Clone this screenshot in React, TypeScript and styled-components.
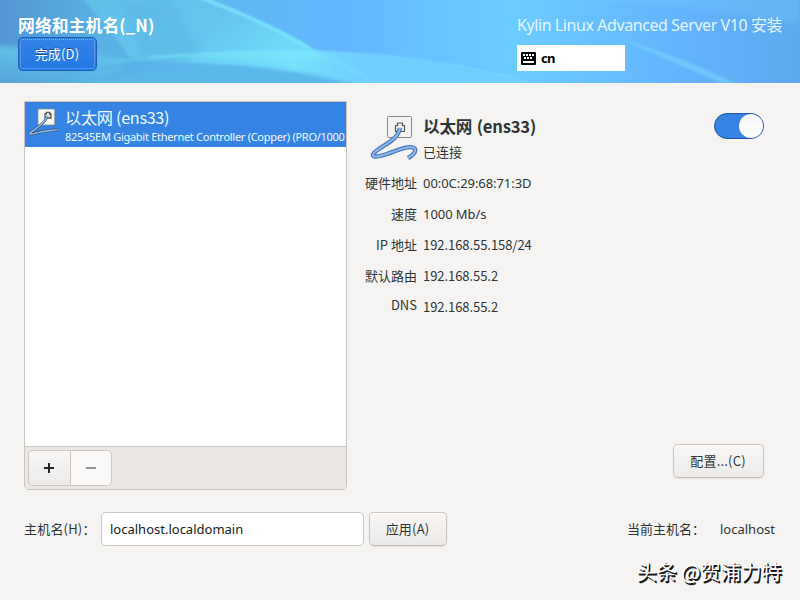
import React from "react";
import styled, { createGlobalStyle, css } from "styled-components";

const GlobalStyle = createGlobalStyle`
  * { box-sizing: border-box; }
  body {
    margin: 0;
    background: #f5f4f2;
    color: #2e3436;
    font: 13px/20px "Noto Sans", "Noto Sans CJK SC", sans-serif;
  }
`;

const Window = styled.div`
  width: 800px;
  height: 600px;
  overflow: hidden;
  display: flex;
  flex-direction: column;
  background: #f5f4f2;
`;

const Header = styled.header`
  position: relative;
  flex: none;
  height: 83px;
  padding: 0 18px;
  display: flex;
  justify-content: space-between;
  overflow: hidden;
  color: #fff;
`;

const Backdrop = styled.svg`
  position: absolute;
  inset: 0;
`;

const HeaderStart = styled.div`
  position: relative;
  padding-top: 13px;
`;

const HeaderEnd = styled.div`
  position: relative;
  width: 265px;
  padding-top: 13px;
`;

const PageTitle = styled.h1`
  margin: 0;
  font: bold 16.8px/24px "Noto Sans CJK SC", sans-serif;
  letter-spacing: 0.1px;
  white-space: nowrap;
`;

const Product = styled.div`
  font: 16px/24px "Noto Sans", "Noto Sans CJK SC", sans-serif;
  letter-spacing: -0.42px;
  color: #e3f5ff;
  white-space: nowrap;
`;

const Keyboard = styled.div`
  margin-top: 8px;
  width: 108px;
  height: 26px;
  display: flex;
  align-items: center;
  gap: 5px;
  padding: 0 4px;
  background: #fff;
  color: #000;
  font-weight: bold;
  letter-spacing: -0.6px;
`;

const Button = styled.button<{ $w: number; $primary?: boolean }>`
  width: ${(p) => p.$w}px;
  height: 34px;
  padding: 0 1px 0 0;
  border: 1px solid #cdc7c2;
  border-bottom-color: #bfb8b1;
  border-radius: 5px;
  background: linear-gradient(#f8f7f6, #edebe9);
  box-shadow: 0 1px 2px rgba(0, 0, 0, 0.07), inset 0 1px #fff;
  color: #2e3436;
  font: 13px/20px "Noto Sans CJK SC", sans-serif;
  letter-spacing: 0.2px;
  white-space: nowrap;
  ${(p) =>
    p.$primary &&
    css`
      display: block;
      border-color: #1b5fb5;
      background: linear-gradient(#3282e6, #2379e2);
      box-shadow: none;
      color: #fff;
      text-shadow: 0 -1px rgba(0, 0, 0, 0.35);
      outline: 1px dotted rgba(255, 255, 255, 0.4);
      outline-offset: -3px;
    `}
`;

const Body = styled.main`
  flex: 1;
  padding: 18px 24px 0;
`;

const Columns = styled.div`
  height: 389px;
  display: flex;
`;

const DevicePanel = styled.section`
  flex: none;
  width: 323px;
  display: flex;
  flex-direction: column;
  border: 1px solid #cac5c0;
  border-radius: 0 0 5px 5px;
  overflow: hidden;
`;

const DeviceList = styled.div`
  flex: 1;
  background: #fff;
`;

const DeviceRow = styled.div`
  height: 45px;
  padding: 4px 0 0 3px;
  display: flex;
  gap: 5px;
  background: #3584e4;
  color: #eff9ff;
  overflow: hidden;
  white-space: nowrap;
  svg { flex: none; margin-top: 1px; }
`;

const DeviceName = styled.div`
  font: 16.2px/22px "Noto Sans CJK SC", sans-serif;
  letter-spacing: -0.3px;
`;

const DeviceModel = styled.div`
  font-size: 11px;
  line-height: 18px;
  letter-spacing: -0.28px;
`;

const ListToolbar = styled.div`
  height: 43px;
  padding: 3px;
  display: flex;
  border-top: 1px solid #cdc7c2;
  background: #eae7e5;
`;

const ToolButton = styled.button<{ $off?: boolean }>`
  width: ${(p) => (p.$off ? 41 : 43)}px;
  height: 36px;
  padding: ${(p) => (p.$off ? "0" : "0 2px 0 0")};
  display: grid;
  place-items: center;
  border: 1px solid #cdc7c2;
  border-left-width: ${(p) => (p.$off ? 0 : 1)}px;
  border-radius: ${(p) => (p.$off ? "0 5px 5px 0" : "5px 0 0 5px")};
  background: ${(p) => (p.$off ? "#faf9f8" : "linear-gradient(#f8f7f6, #edebe9)")};
  color: ${(p) => (p.$off ? "#929595" : "#20272a")};
`;

const Details = styled.section`
  flex: 1;
  display: flex;
  flex-direction: column;
  padding: 11px 12px 12px 18px;
`;

const DetailsHead = styled.div`
  height: 56px;
  display: flex;
  align-items: flex-start;
`;

const LargeIcon = styled.div`
  width: 58px;
  padding: 3px 0 0 5px;
`;

const HeadText = styled.div`
  flex: 1;
  padding-top: 2px;
`;

const DetailsTitle = styled.h2`
  margin: 0;
  font: bold 16.6px/24px "Noto Sans CJK SC", sans-serif;
  letter-spacing: -0.2px;
  word-spacing: 1px;
`;

const Status = styled.div`
  margin-top: 4px;
  font-family: "Noto Sans CJK SC", sans-serif;
`;

const Switch = styled.div`
  width: 50px;
  height: 26px;
  margin-top: 1px;
  display: flex;
  justify-content: flex-end;
  border: 1px solid #23579b;
  border-radius: 13px;
  background: #3584e4;
`;

const Knob = styled.div`
  width: 24px;
  height: 24px;
  border-radius: 50%;
  background: linear-gradient(#f6f5f4, #fff);
`;

const Facts = styled.dl`
  margin: 0;
  padding-top: 5px;
  display: grid;
  grid-template-columns: 52px 1fr;
  grid-auto-rows: 31px;
  column-gap: 6px;
  font-family: "Noto Sans CJK SC", sans-serif;
  white-space: nowrap;
`;

const Term = styled.dt<{ $lift?: boolean }>`
  text-align: right;
  margin-top: ${(p) => (p.$lift ? -2 : 0)}px;
`;

const Value = styled.dd<{ $humanist?: boolean }>`
  margin: 0;
  font-family: ${(p) => (p.$humanist ? '"Noto Sans"' : '"Noto Sans CJK SC"')}, sans-serif;
  letter-spacing: -0.06px;
`;

const ConfigureRow = styled.div`
  margin-top: auto;
  display: flex;
  justify-content: flex-end;
`;

const HostRow = styled.div`
  margin-top: 22px;
  height: 34px;
  display: flex;
  align-items: center;
`;

const HostLabel = styled.label<{ $w: number }>`
  width: ${(p) => p.$w}px;
  font-family: "Noto Sans CJK SC", sans-serif;
  letter-spacing: ${(p) => (p.$w < 80 ? 0.2 : 0)}px;
  white-space: nowrap;
`;

const HostInput = styled.input`
  width: 263px;
  height: 34px;
  margin-right: 5px;
  padding: 0 8px;
  border: 1px solid #cdc7c2;
  border-radius: 5px;
  background: #fff;
  color: #171b1c;
  font: 13px/20px "Noto Sans", sans-serif;
`;

const CurrentHost = styled.div`
  margin-left: auto;
  width: 149px;
  display: flex;
`;

const Credit = styled.div`
  margin: 13px -6px 0 0;
  display: flex;
  justify-content: flex-end;
  gap: 4px;
  color: #fff;
  font: 20.3px/24px "Noto Sans CJK SC", sans-serif;
  letter-spacing: 0.1px;
  text-shadow: 1px 1px #111, 1.5px 1.5px #222;
  white-space: nowrap;
`;

function Waves() {
  return (
    <Backdrop width="800" height="83" viewBox="0 0 800 83" aria-hidden="true">
      <defs>
        <linearGradient id="sky">
          <stop offset="0" stopColor="#5295d2" />
          <stop offset=".12" stopColor="#58b0e4" />
          <stop offset=".29" stopColor="#5fb9f3" />
          <stop offset=".42" stopColor="#62b7ff" />
          <stop offset=".64" stopColor="#6bccff" />
          <stop offset=".86" stopColor="#63b3fd" />
          <stop offset="1" stopColor="#5ca9ee" />
        </linearGradient>
        <linearGradient id="teal" x2="1" y2="0.3">
          <stop offset="0" stopColor="#63c2ea" stopOpacity=".85" />
          <stop offset=".6" stopColor="#64c6ee" stopOpacity=".9" />
          <stop offset="1" stopColor="#6ee0f8" stopOpacity=".9" />
        </linearGradient>
        <linearGradient id="ribbon">
          <stop offset="0" stopColor="#68dbf0" stopOpacity=".2" />
          <stop offset=".45" stopColor="#78e7fb" stopOpacity=".9" />
          <stop offset=".6" stopColor="#76defe" stopOpacity=".6" />
          <stop offset="1" stopColor="#78d9ff" stopOpacity=".25" />
        </linearGradient>
        <linearGradient id="depth" x2="0" y2="1">
          <stop offset="0" stopColor="#69d3f0" stopOpacity=".75" />
          <stop offset="1" stopColor="#58b8e6" stopOpacity=".3" />
        </linearGradient>
        <filter id="soft" filterUnits="userSpaceOnUse" x="-20" y="-20" width="840" height="130"><feGaussianBlur stdDeviation="1" /></filter>
        <filter id="haze" filterUnits="userSpaceOnUse" x="-20" y="-20" width="840" height="130"><feGaussianBlur stdDeviation="2.5" /></filter>
      </defs>
      <rect width="800" height="83" fill="url(#sky)" />
      <path d="M78-5H198Q260 19 310 48L330 60L130 58Q108 25 78-5Z" fill="url(#teal)" filter="url(#soft)" />
      <path d="M-5 46Q60 48 130 60L95 90H-5Z" fill="url(#depth)" filter="url(#haze)" />
      <path d="M120 0L142 58H205L170 0Z" fill="#56addf" opacity=".25" filter="url(#haze)" />
      <path d="M90 62Q240 48 330 52Q440 57 540 90H365Q270 58 90 62Z" fill="url(#ribbon)" filter="url(#soft)" />
      <path d="M196-4Q260 19 310 48" fill="none" stroke="#80eafd" strokeWidth="3" opacity=".85" filter="url(#soft)" />
      <path d="M310 48Q345 64 375 83" fill="none" stroke="#7ee4ff" strokeWidth="2" opacity=".4" filter="url(#soft)" />
      <path d="M150 57Q260 49 330 52Q440 57 530 83" fill="none" stroke="#86eaff" strokeWidth="1.5" opacity=".55" filter="url(#soft)" />
      <path d="M75 90Q150 65 230 66Q310 69 370 90Z" fill="#5ab9e9" opacity=".85" filter="url(#haze)" />
      <path d="M60 76Q130 61 190 59" fill="none" stroke="#4ca7da" strokeWidth="2" opacity=".35" filter="url(#soft)" />
      <path d="M620 39Q680 56 735 83H720Q670 60 620 39Z" fill="#77d8ff" opacity=".6" filter="url(#soft)" />
      <path d="M530-5Q690 4 800 24V-5Z" fill="#7bd4ff" opacity=".25" filter="url(#haze)" />
    </Backdrop>
  );
}

function WiredIcon({ size }: { size: number }) {
  const large = size > 40;
  const cable = large
    ? "M30 13C28 26 10 31 4 38C0 43 8 42 17 39C28 35 42 29 45 34C46 37 43 40 38 43"
    : "M29 14C25 26 10 33 3 39C1 42 9 40 17 38C27 35 38 35 44 34";
  return (
    <svg width={size} height={size} viewBox="0 0 48 48" aria-hidden="true">
      <rect x={large ? 17.5 : 15} y={large ? 1.5 : 3} width={large ? 24 : 25} height={large ? 21 : 24} rx="1" fill={large ? "#f3f3f1" : "#f7f7f5"} stroke="#858783" />
      <path d="M25.5 16.5V10.5H27.5V8H32.5V10.5H34.5V16.5Z" fill="#eee" stroke="#555753" strokeWidth={large ? 1.2 : 2} />
      <path d={cable} fill="none" stroke={large ? "#4575b9" : "#35517b"} strokeWidth={large ? 4.4 : 4} />
      <path d={cable} fill="none" stroke={large ? "#8bb6e8" : "#9bbbe3"} strokeWidth="2.1" />
    </svg>
  );
}

function KeyboardIcon() {
  return (
    <svg width="15" height="13" viewBox="0 0 15 13" aria-hidden="true">
      <rect width="15" height="13" rx="1" fill="#000" />
      <path d="M2 2h2v2H2zM5 2h2v2H5zM8 2h2v2H8zM11 2h2v2h-2zM3 5h2v2H3zM6 5h2v2H6zM9 5h2v2H9zM2 9h11v2H2z" fill="#fff" />
    </svg>
  );
}

export default function App() {
  return (
    <>
      <GlobalStyle />
      <Window>
        <Header>
          <Waves />
          <HeaderStart>
            <PageTitle>网络和主机名(_N)</PageTitle>
            <Button $w={79} $primary>完成(D)</Button>
          </HeaderStart>
          <HeaderEnd>
            <Product>Kylin Linux Advanced Server V10 安装</Product>
            <Keyboard><KeyboardIcon />cn</Keyboard>
          </HeaderEnd>
        </Header>
        <Body>
          <Columns>
            <DevicePanel>
              <DeviceList>
                <DeviceRow>
                  <WiredIcon size={32} />
                  <div>
                    <DeviceName>以太网 (ens33)</DeviceName>
                    <DeviceModel>82545EM Gigabit Ethernet Controller (Copper) (PRO/1000</DeviceModel>
                  </div>
                </DeviceRow>
              </DeviceList>
              <ListToolbar>
                <ToolButton>
                  <svg width="10" height="10"><path d="M0 5H10M5 0V10" stroke="currentColor" strokeWidth="2" /></svg>
                </ToolButton>
                <ToolButton $off disabled>
                  <svg width="10" height="10"><path d="M0 5H10" stroke="currentColor" strokeWidth="2" /></svg>
                </ToolButton>
              </ListToolbar>
            </DevicePanel>
            <Details>
              <DetailsHead>
                <LargeIcon><WiredIcon size={48} /></LargeIcon>
                <HeadText>
                  <DetailsTitle>以太网 (ens33)</DetailsTitle>
                  <Status>已连接</Status>
                </HeadText>
                <Switch><Knob /></Switch>
              </DetailsHead>
              <Facts>
                <Term>硬件地址</Term>
                <Value $humanist>00:0C:29:68:71:3D</Value>
                <Term>速度</Term>
                <Value $humanist>1000 Mb/s</Value>
                <Term>IP 地址</Term>
                <Value>192.168.55.158/24</Value>
                <Term>默认路由</Term>
                <Value>192.168.55.2</Value>
                <Term $lift>DNS</Term>
                <Value>192.168.55.2</Value>
              </Facts>
              <ConfigureRow><Button $w={91}>配置...(C)</Button></ConfigureRow>
            </Details>
          </Columns>
          <HostRow>
            <HostLabel $w={77}>主机名(H)：</HostLabel>
            <HostInput defaultValue="localhost.localdomain" />
            <Button $w={78}>应用(A)</Button>
            <CurrentHost>
              <HostLabel $w={93}>当前主机名：</HostLabel>
              <span>localhost</span>
            </CurrentHost>
          </HostRow>
          <Credit><span>头条</span><span>@贺浦力特</span></Credit>
        </Body>
      </Window>
    </>
  );
}
